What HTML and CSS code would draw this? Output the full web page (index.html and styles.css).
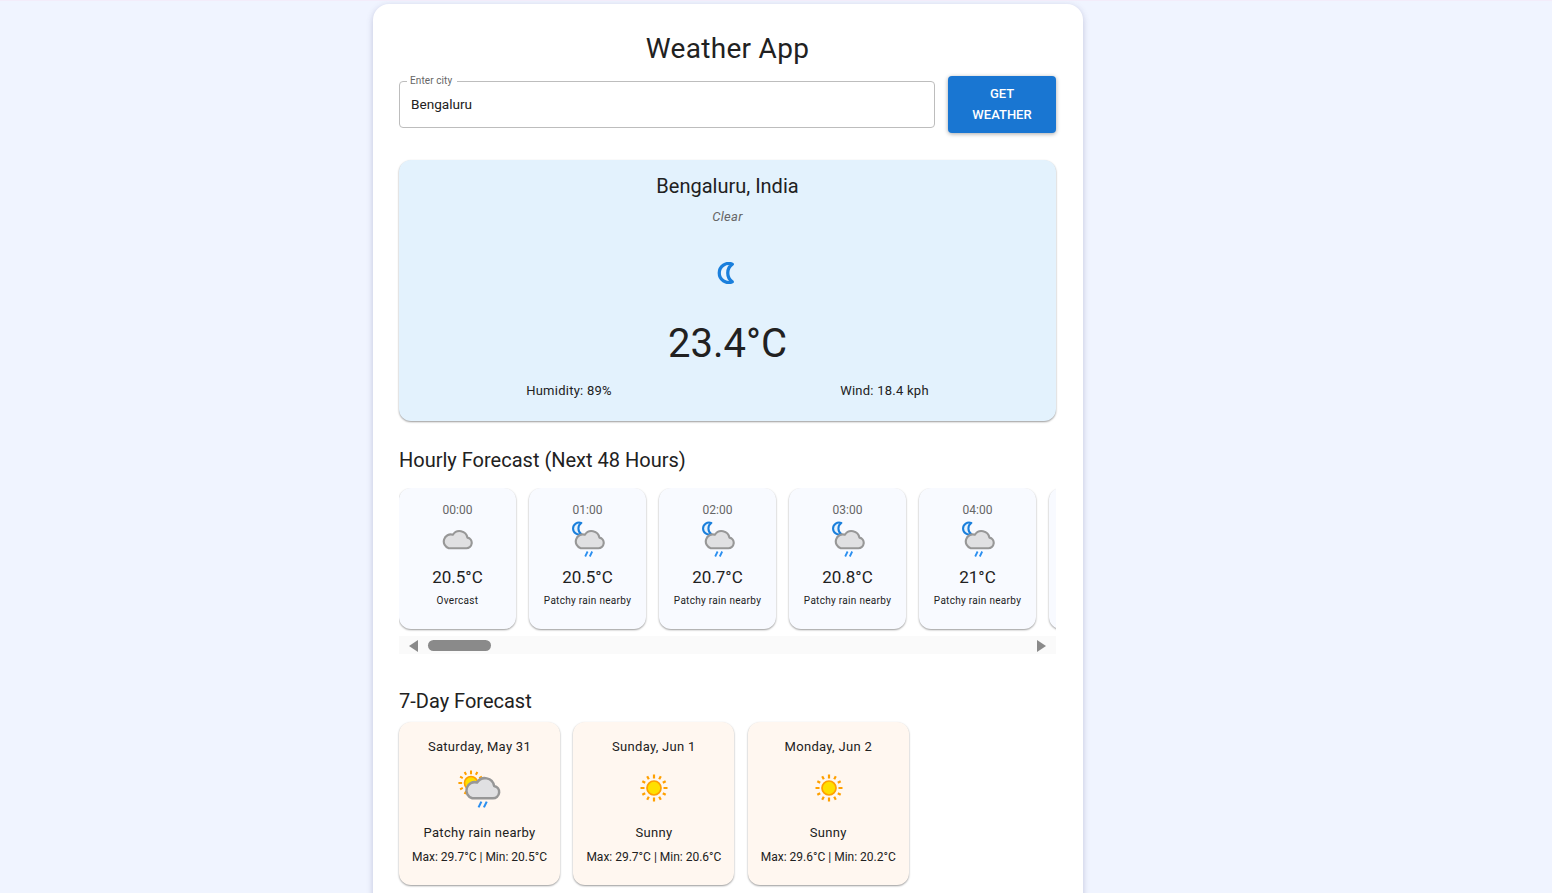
FILE: index.html
```html
<!DOCTYPE html>
<html lang="en">

<head>
    <meta charset="UTF-8">
    <meta name="viewport" content="width=device-width, initial-scale=1.0">
    <title>Weather App</title>
    <link rel="stylesheet" href="styles.css">
</head>

<body>
    <!-- icones usados nos cartoes -->
    <svg class="icon-defs" width="0" height="0">
        <defs>
            <symbol id="cloud" viewBox="0 0 32 22">
                <path d="M7 20.5h18a5.5 5.5 0 0 0 1.2-10.9A8.2 8.2 0 0 0 11.2 6.6 6.8 6.8 0 0 0 7 20.5z" fill="#e0e0e2" stroke="#979797" stroke-width="2.2" stroke-linejoin="round" />
            </symbol>
            <symbol id="moon" viewBox="0 0 14 16">
                <path d="M12 1.5A7 7 0 1 0 12 14.5 8 8 0 0 1 12 1.5z" fill="#e8f3fd" stroke="#1a7fdc" stroke-width="2.4" stroke-linejoin="round" />
            </symbol>
            <symbol id="drops" viewBox="0 0 10 6">
                <path d="M3.6 .5 1.2 5.5M8.2 .5 5.8 5.5" fill="none" stroke="#2b8ff0" stroke-width="1.8" />
            </symbol>
            <symbol id="sun" viewBox="0 0 30 30">
                <circle cx="15" cy="15" r="7" fill="#ffdf00" stroke="#ffa000" stroke-width="1.7" />
                <path d="M15 1.5v4M15 24.5v4M1.5 15h4M24.5 15h4M8.2 3.3l1.6 2.9M20.2 23.8l1.6 2.9M3.3 8.2l2.9 1.6M23.8 20.2l2.9 1.6M3.3 21.8l2.9-1.6M23.8 9.8l2.9-1.6M8.2 26.7l1.6-2.9M20.2 6.2l1.6-2.9" fill="none" stroke="#ffa000" stroke-width="2.2" />
            </symbol>
        </defs>
    </svg>

    <main class="app">
        <h1 class="title">Weather App</h1>

        <form class="search" action="">
            <div class="field">
                <label class="field-label" for="idCity">Enter city</label>
                <input class="field-input" type="text" id="idCity" value="Bengaluru">
            </div>
            <button class="btn" type="button">Get Weather</button>
        </form>

        <section class="current">
            <h2 class="city">Bengaluru, India</h2>
            <p class="cond">Clear</p>
            <svg class="moon-big"><use href="#moon" /></svg>
            <p class="temp">23.4°C</p>
            <div class="stats">
                <span>Humidity: 89%</span>
                <span>Wind: 18.4 kph</span>
            </div>
        </section>

        <h2 class="heading heading-hourly">Hourly Forecast (Next 48 Hours)</h2>
        <div class="hours">
            <div class="hour">
                <p class="hour-time">00:00</p>
                <div class="hour-icon"><svg class="ic-cloud-only"><use href="#cloud" /></svg></div>
                <p class="hour-temp">20.5°C</p>
                <p class="hour-cond">Overcast</p>
            </div>
            <div class="hour">
                <p class="hour-time">01:00</p>
                <div class="hour-icon">
                    <svg class="ic-moon"><use href="#moon" /></svg>
                    <svg class="ic-cloud"><use href="#cloud" /></svg>
                    <svg class="ic-drops"><use href="#drops" /></svg>
                </div>
                <p class="hour-temp">20.5°C</p>
                <p class="hour-cond">Patchy rain nearby</p>
            </div>
            <div class="hour">
                <p class="hour-time">02:00</p>
                <div class="hour-icon">
                    <svg class="ic-moon"><use href="#moon" /></svg>
                    <svg class="ic-cloud"><use href="#cloud" /></svg>
                    <svg class="ic-drops"><use href="#drops" /></svg>
                </div>
                <p class="hour-temp">20.7°C</p>
                <p class="hour-cond">Patchy rain nearby</p>
            </div>
            <div class="hour">
                <p class="hour-time">03:00</p>
                <div class="hour-icon">
                    <svg class="ic-moon"><use href="#moon" /></svg>
                    <svg class="ic-cloud"><use href="#cloud" /></svg>
                    <svg class="ic-drops"><use href="#drops" /></svg>
                </div>
                <p class="hour-temp">20.8°C</p>
                <p class="hour-cond">Patchy rain nearby</p>
            </div>
            <div class="hour">
                <p class="hour-time">04:00</p>
                <div class="hour-icon">
                    <svg class="ic-moon"><use href="#moon" /></svg>
                    <svg class="ic-cloud"><use href="#cloud" /></svg>
                    <svg class="ic-drops"><use href="#drops" /></svg>
                </div>
                <p class="hour-temp">21°C</p>
                <p class="hour-cond">Patchy rain nearby</p>
            </div>
            <div class="hour"></div>
        </div>
        <div class="scrollbar">
            <span class="arrow-left"></span>
            <span class="thumb"></span>
            <span class="arrow-right"></span>
        </div>

        <h2 class="heading heading-days">7-Day Forecast</h2>
        <div class="days">
            <div class="day">
                <p class="day-date">Saturday, May 31</p>
                <div class="day-icon">
                    <svg class="ic-sun-small"><use href="#sun" /></svg>
                    <svg class="ic-day-cloud"><use href="#cloud" /></svg>
                    <svg class="ic-day-drops"><use href="#drops" /></svg>
                </div>
                <p class="day-cond">Patchy rain nearby</p>
                <p class="day-range">Max: 29.7°C | Min: 20.5°C</p>
            </div>
            <div class="day">
                <p class="day-date">Sunday, Jun 1</p>
                <div class="day-icon"><svg class="ic-sun"><use href="#sun" /></svg></div>
                <p class="day-cond">Sunny</p>
                <p class="day-range">Max: 29.7°C | Min: 20.6°C</p>
            </div>
            <div class="day">
                <p class="day-date">Monday, Jun 2</p>
                <div class="day-icon"><svg class="ic-sun"><use href="#sun" /></svg></div>
                <p class="day-cond">Sunny</p>
                <p class="day-range">Max: 29.6°C | Min: 20.2°C</p>
            </div>
        </div>
    </main>
</body>

</html>
```

FILE: styles.css
```css
/* pagina */
html,
body {
    height: 100%;
}

body {
    margin: 0;
    overflow: hidden;
    background: #f0f4ff;
    border-top: 1px solid #f3ecfa;
    box-sizing: border-box;
    font-family: Roboto, sans-serif;
    color: #212121;
}

p,
h1,
h2 {
    margin: 0;
    font-weight: 400;
}

.icon-defs {
    position: absolute;
}

.app {
    box-sizing: border-box;
    width: 710px;
    margin: 3px 0 0 373px;
    padding: 25px 27px 40px 26px;
    background: #fff;
    border-radius: 16px;
    box-shadow: 0 2px 6px rgba(60, 60, 120, 0.25);
}

.title {
    font-size: 28px;
    line-height: 40px;
    text-align: center;
    letter-spacing: 0.3px;
}

/* busca */
.search {
    display: flex;
    align-items: center;
    gap: 13px;
    margin-top: 7px;
}

.field {
    position: relative;
    flex: 1;
}

.field-label {
    position: absolute;
    top: -6px;
    left: 8px;
    padding: 0 5px 0 3px;
    background: #fff;
    font-size: 10px;
    line-height: 12px;
    letter-spacing: 0.1px;
    color: #666;
}

.field-input {
    box-sizing: border-box;
    display: block;
    width: 100%;
    height: 47px;
    padding: 0 11px 2px;
    border: 1px solid #bdbdbd;
    border-radius: 4px;
    font-family: Roboto, sans-serif;
    font-size: 13.6px;
    color: #212121;
}

.btn {
    width: 108px;
    height: 57px;
    padding: 0 16px 2px;
    border: 0;
    border-radius: 4px;
    background: #1976d2;
    box-shadow: 0 1px 4px rgba(0, 0, 0, 0.35);
    color: #fff;
    font-family: Roboto, sans-serif;
    font-size: 13px;
    font-weight: 500;
    line-height: 21px;
    text-transform: uppercase;
}

/* tempo atual */
.current {
    box-sizing: border-box;
    height: 261px;
    margin-top: 27px;
    padding: 13px 13px 0;
    background: #e3f2fd;
    border-radius: 12px;
    box-shadow: 0 1px 2px rgba(0, 0, 0, 0.4);
    text-align: center;
}

.city {
    font-size: 20px;
    line-height: 26px;
}

.cond {
    margin-top: 9px;
    font-size: 13px;
    line-height: 18px;
    font-style: italic;
    letter-spacing: 0.3px;
    color: #666;
}

.moon-big {
    display: block;
    width: 19px;
    height: 22px;
    margin: 36px auto 0;
    transform: translateX(-2px);
}

.temp {
    margin-top: 36px;
    font-size: 40px;
    line-height: 48px;
}

.stats {
    display: flex;
    justify-content: space-around;
    margin-top: 14px;
    font-size: 13px;
    line-height: 18px;
    letter-spacing: 0.25px;
}

/* previsao por hora */
.heading {
    font-size: 20px;
    line-height: 28px;
}

.heading-hourly {
    margin-top: 25px;
}

.hours {
    display: flex;
    gap: 13px;
    overflow: hidden;
    margin-top: 14px;
    padding-bottom: 7px;
}

.hour {
    flex: 0 0 117px;
    box-sizing: border-box;
    height: 141px;
    padding-top: 15px;
    background: #f8faff;
    border-radius: 12px;
    box-shadow: 0 1px 2px rgba(0, 0, 0, 0.4);
    text-align: center;
}

.hour-time {
    font-size: 12px;
    line-height: 14px;
    color: #666;
}

.hour-icon {
    position: relative;
    height: 38px;
    margin-top: 3px;
}

.ic-cloud-only {
    position: absolute;
    top: 8px;
    left: 43px;
    width: 31px;
    height: 22px;
}

.ic-cloud {
    position: absolute;
    top: 8px;
    left: 45px;
    width: 31px;
    height: 22px;
}

.ic-moon {
    position: absolute;
    top: 1px;
    left: 42px;
    width: 12px;
    height: 15px;
}

.ic-drops {
    position: absolute;
    top: 31px;
    left: 55px;
    width: 10px;
    height: 6px;
}

.hour-temp {
    margin-top: 8px;
    font-size: 17px;
    line-height: 22px;
}

.hour-cond {
    margin-top: 6px;
    font-size: 10px;
    line-height: 14px;
    letter-spacing: 0.3px;
}

/* barra de rolagem */
.scrollbar {
    display: flex;
    align-items: center;
    height: 18px;
    padding: 0 10px;
    background: #fafafa;
}

.arrow-left {
    margin-top: 1px;
    border-top: 6px solid transparent;
    border-bottom: 6px solid transparent;
    border-right: 9px solid #8a8a8a;
}

.arrow-right {
    margin: 1px 0 0 auto;
    border-top: 6px solid transparent;
    border-bottom: 6px solid transparent;
    border-left: 9px solid #8a8a8a;
}

.thumb {
    width: 63px;
    height: 11px;
    margin-left: 10px;
    border-radius: 6px;
    background: #8a8a8a;
}

/* previsao de 7 dias */
.heading-days {
    margin-top: 33px;
}

.days {
    display: flex;
    gap: 13.4px;
    margin-top: 7px;
}

.day {
    flex: 0 0 161px;
    box-sizing: border-box;
    height: 163px;
    padding-top: 16px;
    background: #fff7f0;
    border-radius: 12px;
    box-shadow: 0 1px 2px rgba(0, 0, 0, 0.4);
    text-align: center;
    font-size: 13px;
}

.day-date,
.day-cond {
    line-height: 18px;
    letter-spacing: 0.3px;
}

.day-icon {
    position: relative;
    height: 48px;
    margin-top: 10px;
}

.ic-sun {
    position: absolute;
    top: 7px;
    left: 66px;
    width: 30px;
    height: 30px;
}

.ic-sun-small {
    position: absolute;
    top: 3px;
    left: 58px;
    width: 28px;
    height: 28px;
}

.ic-day-cloud {
    position: absolute;
    top: 9px;
    left: 65px;
    width: 37px;
    height: 25px;
}

.ic-day-drops {
    position: absolute;
    top: 35px;
    left: 78px;
    width: 12px;
    height: 7px;
}

.day-cond {
    margin-top: 10px;
}

.day-range {
    margin-top: 7px;
    font-size: 12px;
    line-height: 16px;
}
```
